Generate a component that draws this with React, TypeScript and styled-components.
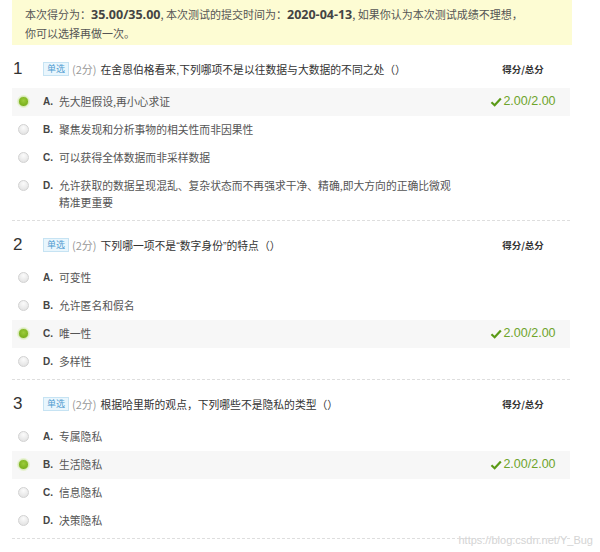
import React from 'react';
import styled, { createGlobalStyle } from 'styled-components';

const GlobalStyle = createGlobalStyle`
  body {
    margin: 0;
    background: #ffffff;
    font-family: "Liberation Sans", "Noto Sans CJK SC", sans-serif;
  }
`;

const Page = styled.div`
  position: relative;
  width: 600px;
  height: 552px;
  overflow: hidden;
  padding-left: 12px;
  box-sizing: border-box;
`;

const Notice = styled.div`
  width: 560px;
  height: 45px;
  box-sizing: border-box;
  padding: 5px 13px 0;
  background: #fdfcd3;
  color: #555;
  font-size: 11px;
  line-height: 18px;
  font-family: "Noto Sans CJK SC", sans-serif;
  > b {
    font-family: "Open Sans", "Liberation Sans", sans-serif;
    font-size: 12.5px;
    color: #444;
  }
`;

const Question = styled.section`
  width: 558px;
  border-bottom: 1px dashed #dedede;
`;

const Header = styled.div`
  display: flex;
  align-items: center;
  height: 22px;
  padding: 13px 0 8px;
`;

const Num = styled.span`
  width: 30px;
  padding-left: 1px;
  font-size: 17px;
  color: #333;
`;

const Tag = styled.span`
  display: inline-block;
  height: 12px;
  line-height: 12px;
  padding: 0 3px;
  border: 1px solid #c6e3f3;
  background: #e9f6fd;
  color: #4f9bd0;
  font-size: 9px;
  font-family: "Noto Sans CJK SC", sans-serif;
`;

const Points = styled.span`
  margin: 0 4px 0 3px;
  color: #999;
  font-size: 11px;
  font-family: "Noto Sans CJK SC", sans-serif;
`;

const Title = styled.span`
  flex: 1;
  color: #333;
  font-size: 10.8px;
  font-family: "Liberation Sans", "Noto Sans CJK SC", sans-serif;
`;

const ScoreHead = styled.span`
  width: 94px;
  text-align: center;
  color: #333;
  font-size: 9.5px;
  font-weight: bold;
  font-family: "Noto Sans CJK SC", sans-serif;
`;

const Options = styled.div`
  padding-bottom: 3px;
`;

const Option = styled.div<{ $chosen?: boolean }>`
  display: flex;
  align-items: flex-start;
  padding: 5px 0 6px 6px;
  line-height: 17px;
  background: ${(p) => (p.$chosen ? '#f7f7f7' : 'transparent')};
`;

const Radio = styled.span<{ $chosen?: boolean }>`
  flex: none;
  width: 11px;
  height: 11px;
  margin-top: 3px;
  border-radius: 50%;
  box-sizing: border-box;
  border: 1px solid ${(p) => (p.$chosen ? '#cfe6a6' : '#d2d2d2')};
  background: ${(p) =>
    p.$chosen
      ? 'radial-gradient(circle at 50% 40%, #9ccc3a 0%, #7ab01c 70%)'
      : 'radial-gradient(circle at 50% 30%, #fbfbfb 0%, #e4e4e4 80%)'};
  box-shadow: ${(p) => (p.$chosen ? '0 0 0 1px #e6f2d0' : 'none')};
`;

const Letter = styled.span`
  flex: none;
  width: 16px;
  margin-left: 14px;
  color: #444;
  font-size: 10px;
  font-weight: bold;
`;

const Text = styled.span`
  width: 400px;
  color: #555;
  font-size: 10.8px;
  font-family: "Noto Sans CJK SC", sans-serif;
`;

const Score = styled.span`
  margin-left: auto;
  width: 94px;
  display: flex;
  align-items: center;
  justify-content: center;
  color: #6ea42b;
  font-size: 12.5px;
  > svg {
    margin-right: 1px;
  }
`;

const Watermark = styled.div`
  position: absolute;
  right: 7px;
  bottom: 6px;
  color: #d4d4d4;
  font-size: 11px;
  text-shadow: 0 0 1px #fff;
`;

const Check = () => (
  <svg width="12" height="10" viewBox="0 0 13 11">
    <path d="M1.5 5.8 L5 9 L11.8 1.6" fill="none" stroke="#5a9a16" strokeWidth="2.4" />
  </svg>
);

type Opt = { key: string; text: string; chosen?: boolean };
type Q = { num: number; title: string; options: Opt[] };

const questions: Q[] = [
  {
    num: 1,
    title: '在舍恩伯格看来,下列哪项不是以往数据与大数据的不同之处（）',
    options: [
      { key: 'A.', text: '先大胆假设,再小心求证', chosen: true },
      { key: 'B.', text: '聚焦发现和分析事物的相关性而非因果性' },
      { key: 'C.', text: '可以获得全体数据而非采样数据' },
      {
        key: 'D.',
        text: '允许获取的数据呈现混乱、复杂状态而不再强求干净、精确,即大方向的正确比微观精准更重要',
      },
    ],
  },
  {
    num: 2,
    title: '下列哪一项不是“数字身份”的特点（）',
    options: [
      { key: 'A.', text: '可变性' },
      { key: 'B.', text: '允许匿名和假名' },
      { key: 'C.', text: '唯一性', chosen: true },
      { key: 'D.', text: '多样性' },
    ],
  },
  {
    num: 3,
    title: '根据哈里斯的观点，下列哪些不是隐私的类型（）',
    options: [
      { key: 'A.', text: '专属隐私' },
      { key: 'B.', text: '生活隐私', chosen: true },
      { key: 'C.', text: '信息隐私' },
      { key: 'D.', text: '决策隐私' },
    ],
  },
];

const App: React.FC = () => {
  return (
    <Page>
      <GlobalStyle />
      <Notice>
        本次得分为：<b>35.00/35.00</b>, 本次测试的提交时间为：<b>2020-04-13</b>, 如果你认为本次测试成绩不理想，
        <br />
        你可以选择再做一次。
      </Notice>
      {questions.map((q) => (
        <Question key={q.num}>
          <Header>
            <Num>{q.num}</Num>
            <Tag>单选</Tag>
            <Points>(2分)</Points>
            <Title>{q.title}</Title>
            <ScoreHead>得分/总分</ScoreHead>
          </Header>
          <Options>
            {q.options.map((o) => (
              <Option key={o.key} $chosen={o.chosen}>
                <Radio $chosen={o.chosen} />
                <Letter>{o.key}</Letter>
                <Text>{o.text}</Text>
                {o.chosen && (
                  <Score>
                    <Check />
                    2.00/2.00
                  </Score>
                )}
              </Option>
            ))}
          </Options>
        </Question>
      ))}
      <Watermark>https://blog.csdn.net/Y_Bug</Watermark>
    </Page>
  );
};

export default App;
